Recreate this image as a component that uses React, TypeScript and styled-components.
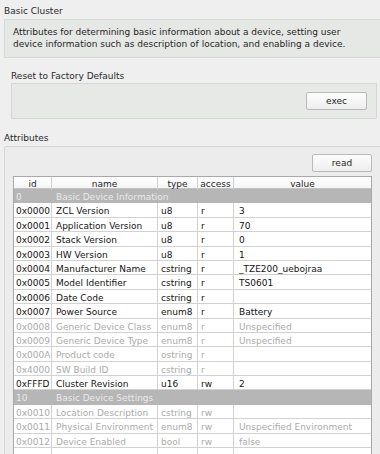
import styled, { createGlobalStyle } from 'styled-components'

const GlobalStyle = createGlobalStyle`
  html, body {
    margin: 0;
    padding: 0;
    background: #efefef;
  }
  body {
    font-family: 'DejaVu Sans', 'Noto Sans', sans-serif;
    font-size: 9px;
    color: #1b1b1b;
  }
`

const Page = styled.div`
  width: 380px;
  height: 454px;
  overflow: hidden;
  background: #efefef;
  padding-top: 5px;
  box-sizing: border-box;
`

const SectionTitle = styled.div<{ indent?: number }>`
  line-height: 12px;
  padding-left: ${(p) => p.indent ?? 4}px;
  color: #2a2a2a;
`

const Description = styled.div`
  margin: 2px 0 0 4px;
  width: 377px;
  height: 39px;
  box-sizing: border-box;
  border: 1px solid #d6dad6;
  background: #e5e8e5;
  padding: 6px 14px 0 8px;
  line-height: 12px;
  color: #262626;
`

const SubSection = styled.div`
  padding-top: 12px;
`

const CommandBox = styled.div`
  margin: 1px 0 0 11px;
  width: 366px;
  height: 36px;
  box-sizing: border-box;
  border: 1px solid #d3d6d3;
  border-radius: 1px;
  background: #e6e9e6;
  display: flex;
  justify-content: flex-end;
  align-items: flex-start;
  padding: 8px 9px 0 0;
`

const Button = styled.button<{ w: number }>`
  width: ${(p) => p.w}px;
  height: 18px;
  box-sizing: border-box;
  border: 1px solid #b9b9b9;
  border-radius: 2px;
  background: linear-gradient(#fdfdfd, #eeeeee);
  font: inherit;
  color: #1e1e1e;
  padding: 0;
  line-height: 16px;
  text-align: center;
`

const AttrTitle = styled(SectionTitle)`
  margin-top: 13px;
`

const GroupBox = styled.div`
  margin: 2px 0 0 4px;
  width: 377px;
  height: 320px;
  box-sizing: border-box;
  border: 1px solid #d4d4d4;
  border-radius: 2px;
  background: #ececec;
  padding: 7px 8px 0;
`

const Toolbar = styled.div`
  display: flex;
  justify-content: flex-end;
  margin-bottom: 4px;
`

const Table = styled.div`
  border: 1px solid #a9a9a9;
  border-bottom: none;
  background: #ffffff;
`

const Row = styled.div`
  display: grid;
  grid-template-columns: 38px 106px 40px 36px 1fr;
  height: 14.4px;
  box-sizing: border-box;
  border-bottom: 1px solid #d2d2d2;
  line-height: 13px;
`

const HeaderRow = styled(Row)`
  height: 12px;
  line-height: 11px;
  background: linear-gradient(#ffffff, #f6f6f6);
  border-bottom: 1px solid #c2c2c2;
`

const HeadCell = styled.div<{ last?: boolean }>`
  text-align: center;
  padding-top: 2px;
  border-right: ${(p) => (p.last ? 'none' : '1px solid #cfcfcf')};
  color: #1e1e1e;
`

const Cell = styled.div<{ muted?: boolean; last?: boolean; pad?: number }>`
  padding-left: ${(p) => p.pad ?? 3}px;
  padding-top: 2px;
  border-right: ${(p) => (p.last ? 'none' : '1px solid #d2d2d2')};
  color: ${(p) => (p.muted ? '#a9aba9' : '#141414')};
  white-space: nowrap;
  overflow: hidden;
`

const GroupRow = styled.div`
  display: grid;
  grid-template-columns: 38px 1fr;
  height: 14.4px;
  box-sizing: border-box;
  background: #b6b6b6;
  border-bottom: 1px solid #b6b6b6;
  line-height: 13px;
  color: #e9e9e9;
`

const GroupCell = styled.div<{ pad: number }>`
  padding-left: ${(p) => p.pad}px;
  padding-top: 2px;
  white-space: nowrap;
`

type Attr = {
  id: string
  name: string
  type: string
  access: string
  value: string
  muted?: boolean
}

type Item = { group: string; title: string } | Attr

const items: Item[] = [
  { group: '0', title: 'Basic Device Information' },
  { id: '0x0000', name: 'ZCL Version', type: 'u8', access: 'r', value: '3' },
  { id: '0x0001', name: 'Application Version', type: 'u8', access: 'r', value: '70' },
  { id: '0x0002', name: 'Stack Version', type: 'u8', access: 'r', value: '0' },
  { id: '0x0003', name: 'HW Version', type: 'u8', access: 'r', value: '1' },
  { id: '0x0004', name: 'Manufacturer Name', type: 'cstring', access: 'r', value: '_TZE200_uebojraa' },
  { id: '0x0005', name: 'Model Identifier', type: 'cstring', access: 'r', value: 'TS0601' },
  { id: '0x0006', name: 'Date Code', type: 'cstring', access: 'r', value: '' },
  { id: '0x0007', name: 'Power Source', type: 'enum8', access: 'r', value: 'Battery' },
  { id: '0x0008', name: 'Generic Device Class', type: 'enum8', access: 'r', value: 'Unspecified', muted: true },
  { id: '0x0009', name: 'Generic Device Type', type: 'enum8', access: 'r', value: 'Unspecified', muted: true },
  { id: '0x000A', name: 'Product code', type: 'ostring', access: 'r', value: '', muted: true },
  { id: '0x4000', name: 'SW Build ID', type: 'cstring', access: 'r', value: '', muted: true },
  { id: '0xFFFD', name: 'Cluster Revision', type: 'u16', access: 'rw', value: '2' },
  { group: '10', title: 'Basic Device Settings' },
  { id: '0x0010', name: 'Location Description', type: 'cstring', access: 'rw', value: '', muted: true },
  { id: '0x0011', name: 'Physical Environment', type: 'enum8', access: 'rw', value: 'Unspecified Environment', muted: true },
  { id: '0x0012', name: 'Device Enabled', type: 'bool', access: 'rw', value: 'false', muted: true },
  { id: '', name: '', type: '', access: '', value: '', muted: true },
]

export default function App() {
  return (
    <Page>
      <GlobalStyle />
      <SectionTitle>Basic Cluster</SectionTitle>
      <Description>
        Attributes for determining basic information about a device, setting user device information such as
        description of location, and enabling a device.
      </Description>
      <SubSection>
        <SectionTitle indent={11}>Reset to Factory Defaults</SectionTitle>
        <CommandBox>
          <Button w={61}>exec</Button>
        </CommandBox>
      </SubSection>
      <AttrTitle>Attributes</AttrTitle>
      <GroupBox>
        <Toolbar>
          <Button w={60}>read</Button>
        </Toolbar>
        <Table>
          <HeaderRow>
            <HeadCell>id</HeadCell>
            <HeadCell>name</HeadCell>
            <HeadCell>type</HeadCell>
            <HeadCell>access</HeadCell>
            <HeadCell last>value</HeadCell>
          </HeaderRow>
          {items.map((it, i) =>
            'group' in it ? (
              <GroupRow key={i}>
                <GroupCell pad={2}>{it.group}</GroupCell>
                <GroupCell pad={4}>{it.title}</GroupCell>
              </GroupRow>
            ) : (
              <Row key={i}>
                <Cell pad={2} muted={it.muted}>{it.id}</Cell>
                <Cell pad={4} muted={it.muted}>{it.name}</Cell>
                <Cell muted={it.muted}>{it.type}</Cell>
                <Cell muted={it.muted}>{it.access}</Cell>
                <Cell pad={5} muted={it.muted} last>{it.value}</Cell>
              </Row>
            ),
          )}
        </Table>
      </GroupBox>
    </Page>
  )
}
